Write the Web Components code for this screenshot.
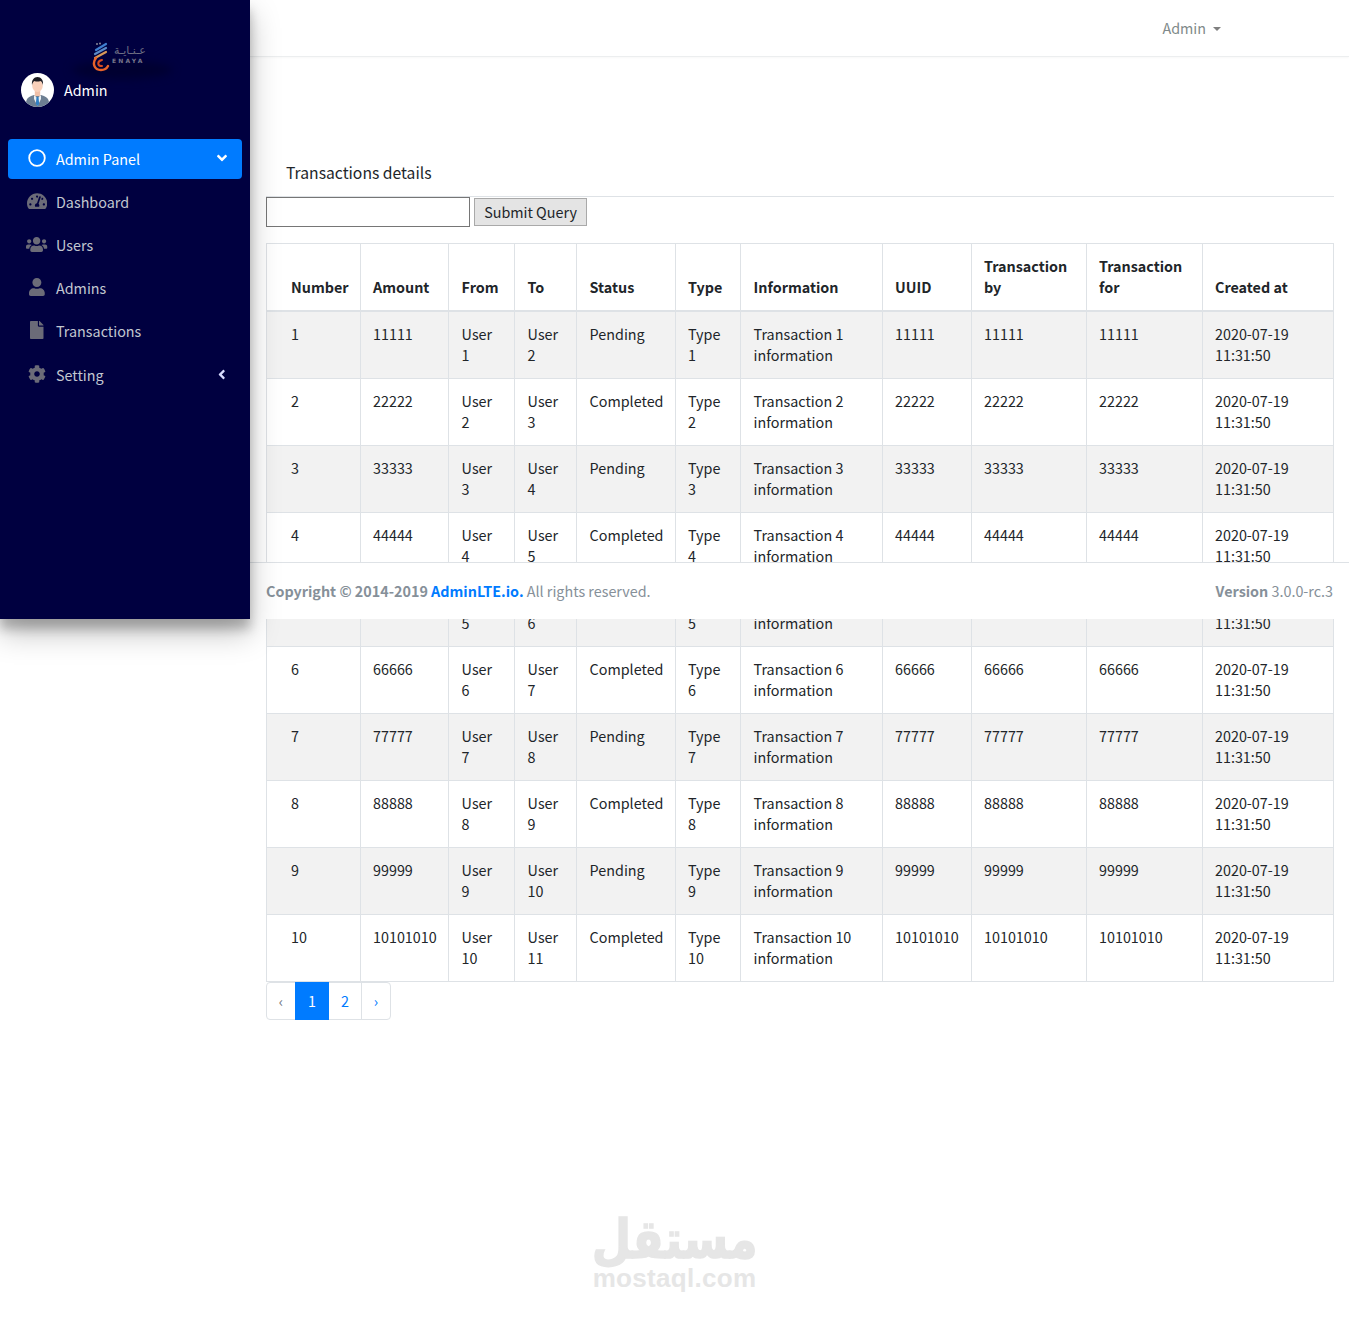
<!DOCTYPE html>
<html lang="en"><head><meta charset="utf-8"><title>Transactions</title>
<style>
html,body{margin:0;padding:0;background:#fff}
body{font-family:"Noto Sans CJK SC","Source Sans Pro","Noto Sans",sans-serif;font-size:14.35px;line-height:21px;color:#212529}
</style></head><body>
<x-app>
  <x-sidebar slot="side"></x-sidebar>
  <x-topbar slot="main"></x-topbar>
  <x-content slot="main"></x-content>
  <x-footer slot="over"></x-footer>
  <x-watermark slot="over"></x-watermark>
</x-app>
<script>
const ICONS={
dash:['0 0 576 512','M288 32C128.94 32 0 160.94 0 320c0 52.8 14.25 102.26 39.06 144.8 5.61 9.62 16.3 15.2 27.44 15.2h443c11.14 0 21.83-5.58 27.44-15.2C561.75 422.26 576 372.8 576 320c0-159.06-128.94-288-288-288zm0 64c14.71 0 26.58 10.13 30.32 23.65-1.11 2.26-2.64 4.23-3.45 6.67l-9.22 27.67c-5.13 3.49-10.97 6.01-17.64 6.01-17.67 0-32-14.33-32-32S270.33 96 288 96zM96 384c-17.67 0-32-14.33-32-32s14.33-32 32-32 32 14.33 32 32-14.33 32-32 32zm48-160c-17.67 0-32-14.33-32-32s14.33-32 32-32 32 14.33 32 32-14.33 32-32 32zm246.77-72.41l-61.33 184C343.13 347.33 352 364.54 352 384c0 11.72-3.38 22.55-8.88 32H232.88c-5.5-9.45-8.88-20.28-8.88-32 0-33.94 26.5-61.43 59.9-63.59l61.34-184.01c4.17-12.56 17.73-19.45 30.36-15.17 12.57 4.19 19.35 17.79 15.17 30.36zm14.66 57.2l15.52-46.55c3.47-1.29 7.13-2.23 11.05-2.23 17.67 0 32 14.33 32 32s-14.33 32-32 32c-11.38-.01-20.89-6.28-26.57-15.22zM480 384c-17.67 0-32-14.33-32-32s14.33-32 32-32 32 14.33 32 32-14.33 32-32 32z'],
users:['0 0 640 512','M96 224c35.3 0 64-28.7 64-64s-28.7-64-64-64-64 28.7-64 64 28.7 64 64 64zm448 0c35.3 0 64-28.7 64-64s-28.7-64-64-64-64 28.7-64 64 28.7 64 64 64zm32 32h-64c-17.6 0-33.5 7.1-45.1 18.6 40.3 22.1 68.9 62 75.1 109.4h66c17.7 0 32-14.3 32-32v-32c0-35.3-28.7-64-64-64zm-256 0c61.9 0 112-50.1 112-112S381.9 32 320 32 208 82.1 208 144s50.1 112 112 112zm76.8 32h-8.3c-20.8 10-43.9 16-68.5 16s-47.6-6-68.5-16h-8.3C179.6 288 128 339.6 128 403.2V432c0 26.5 21.5 48 48 48h288c26.5 0 48-21.5 48-48v-28.8c0-63.6-51.6-115.2-115.2-115.2zm-223.7-13.4C161.5 263.1 145.6 256 128 256H64c-35.3 0-64 28.7-64 64v32c0 17.7 14.3 32 32 32h65.9c6.3-47.4 34.9-87.3 75.2-109.4z'],
user:['0 0 448 512','M224 256c70.7 0 128-57.3 128-128S294.7 0 224 0 96 57.3 96 128s57.3 128 128 128zm89.6 32h-16.7c-22.2 10.2-46.9 16-72.9 16s-50.6-5.8-72.9-16h-16.7C60.2 288 0 348.2 0 422.4V464c0 26.5 21.5 48 48 48h352c26.5 0 48-21.5 48-48v-41.6c0-74.2-60.2-134.4-134.4-134.4z'],
file:['0 0 384 512','M224 136V0H24C10.7 0 0 10.7 0 24v464c0 13.3 10.7 24 24 24h336c13.3 0 24-10.7 24-24V160H248c-13.2 0-24-10.8-24-24zm160-14.1v6.1H256V0h6.1c6.4 0 12.5 2.5 17 7l97.9 98c4.5 4.5 7 10.6 7 16.9z'],
cog:['0 0 512 512','M487.4 315.7l-42.6-24.6c4.3-23.2 4.3-47 0-70.2l42.6-24.6c4.9-2.8 7.1-8.6 5.5-14-11.1-35.6-30-67.8-54.7-94.6-3.8-4.1-10-5.1-14.8-2.3L380.8 110c-17.9-15.4-38.5-27.3-60.8-35.1V25.8c0-5.6-3.9-10.5-9.4-11.7-36.7-8.2-74.3-7.8-109.2 0-5.5 1.2-9.4 6.1-9.4 11.7V75c-22.2 7.9-42.8 19.8-60.8 35.1L88.7 85.5c-4.9-2.8-11-1.9-14.8 2.3-24.7 26.7-43.6 58.9-54.7 94.6-1.7 5.4.6 11.2 5.5 14L67.3 221c-4.3 23.2-4.3 47 0 70.2l-42.6 24.6c-4.9 2.8-7.1 8.6-5.5 14 11.1 35.6 30 67.8 54.7 94.6 3.8 4.1 10 5.1 14.8 2.3l42.6-24.6c17.9 15.4 38.5 27.3 60.8 35.1v49.2c0 5.6 3.9 10.5 9.4 11.7 36.7 8.2 74.3 7.8 109.2 0 5.5-1.2 9.4-6.1 9.4-11.7v-49.2c22.2-7.9 42.8-19.8 60.8-35.1l42.6 24.6c4.9 2.8 11 1.9 14.8-2.3 24.7-26.7 43.6-58.9 54.7-94.6 1.5-5.5-.7-11.3-5.6-14.1zM256 336c-44.1 0-80-35.9-80-80s35.9-80 80-80 80 35.9 80 80-35.9 80-80 80z'],
down:['0 0 320 512','M143 352.3L7 216.3c-9.4-9.4-9.4-24.6 0-33.9l22.6-22.6c9.4-9.4 24.6-9.4 33.9 0l96.4 96.4 96.4-96.4c9.4-9.4 24.6-9.4 33.9 0l22.6 22.6c9.4 9.4 9.4 24.6 0 33.9l-136 136c-9.2 9.4-24.4 9.4-33.8 0z'],
left:['0 0 256 512','M31.7 239l136-136c9.4-9.4 24.6-9.4 33.9 0l22.6 22.6c9.4 9.4 9.4 24.6 0 33.9L127.9 256l96.4 96.4c9.4 9.4 9.4 24.6 0 33.9L201.7 409c-9.4 9.4-24.6 9.4-33.9 0l-136-136c-9.5-9.4-9.5-24.6-.1-34z']
};
const svg=(n,h)=>{const[v,d]=ICONS[n];const p=v.split(' ');const w=h*p[2]/p[3];return `<svg width="${w}" height="${h}" viewBox="${v}" fill="currentColor" aria-hidden="true"><path d="${d}"/></svg>`};
function def(name,html,init){customElements.define(name,class extends HTMLElement{constructor(){super();this.attachShadow({mode:'open'}).innerHTML=typeof html==='function'?html(this):html}connectedCallback(){init&&init(this)}})}

def('x-app',`<style>
:host{display:block;position:relative;height:1319px;overflow:hidden}
.row{display:flex;align-items:flex-start}
.side{flex:0 0 250px;position:relative;z-index:3}
.main{flex:1;min-width:0}
</style><div class="row"><div class="side"><slot name="side"></slot></div><div class="main"><slot name="main"></slot></div></div><slot name="over"></slot>`);

def('x-sidebar',()=>`<style>
:host{display:flex;flex-direction:column;width:250px;height:619px;box-sizing:border-box;background:#000040;color:#c2c7d0;box-shadow:0 14px 28px rgba(0,0,0,.25),0 10px 10px rgba(0,0,0,.22);padding:0 8px}
.brand{height:40px;margin-top:41px;display:block}
.user{display:flex;align-items:center;gap:10px;margin:-8px 0 0 13px;height:34px;color:#fff}
.user span{padding-bottom:2px}
nav{margin-top:32px;display:flex;flex-direction:column}
</style>
<x-logo class="brand"></x-logo>
<div class="user"><x-avatar></x-avatar><span>Admin</span></div>
<nav>
<x-navitem active icon="ring" caret="down">Admin Panel</x-navitem>
<x-navitem icon="dash">Dashboard</x-navitem>
<x-navitem icon="users">Users</x-navitem>
<x-navitem icon="user">Admins</x-navitem>
<x-navitem icon="file" style="margin-bottom:4px">Transactions</x-navitem>
<x-navitem icon="cog" caret="left">Setting</x-navitem>
</nav>`);

def('x-logo',`<style>
:host{display:block;position:relative}
.wrap{position:relative;left:62px;top:0;width:100px;height:40px}
.glow{position:absolute;left:2px;top:20px;width:100px;height:18px;border-radius:50%;background:#000030;filter:blur(4px)}
svg{position:absolute;left:22px;top:1px}
.ar{position:absolute;left:42px;top:3px;font:11px/13px "DejaVu Sans",sans-serif;color:#6f6f82;direction:rtl;width:36px;text-align:center;white-space:nowrap}
.en{position:absolute;left:42px;top:16px;font:bold 6px/8px "DejaVu Sans",sans-serif;color:#77778a;letter-spacing:2.2px;white-space:nowrap}
</style><div class="wrap"><div class="glow"></div>
<svg width="18" height="30" viewBox="0 0 18 30" fill="none" stroke-linecap="round">
<path d="M14 2 L4 8" stroke="#3f7fd0" stroke-width="2.200"/><path d="M14 6 L3 12" stroke="#5a8ac8" stroke-width="2.200"/><path d="M14 10 L3 16" stroke="#d89858" stroke-width="2.200"/>
<path d="M4 16 C0 21 2 28 9 28 C13 28 15 26 16 24" stroke="#e8622a" stroke-width="2.400"/><path d="M10 18 C5 19 5 24 10 24" stroke="#d84a20" stroke-width="2"/>
<circle cx="5" cy="2" r="1" fill="#8a8a9a"/><circle cx="8" cy="1.500" r="1" fill="#8a8a9a"/></svg>
<span class="ar">عـنـايـة</span><span class="en">ENAYA</span></div>`);

def('x-avatar',`<style>:host{display:block;width:33px;height:34px;flex:none}svg{display:block}</style>
<svg width="33" height="34" viewBox="0 0 33 34"><defs><clipPath id="c"><ellipse cx="16.5" cy="17" rx="16.5" ry="17"/></clipPath></defs>
<ellipse cx="16.5" cy="17" rx="16.5" ry="17" fill="#fff"/><g clip-path="url(#c)">
<path d="M5 30c0-5 4-7 8-8h7c4 1 8 3 8 8v4H5z" fill="#6d7f92"/>
<path d="M13 22l3.5 3 3.500-3 0 4-3.500 7-3.500-7z" fill="#e8eef2"/><path d="M15.500 24h2l.7 7-1.700 2-1.700-2z" fill="#2f7fc4"/>
<rect x="13.800" y="17" width="5.400" height="6" fill="#f0c0a8"/><ellipse cx="16.500" cy="12.500" rx="5.300" ry="6.500" fill="#f8d0ba"/>
<path d="M11 12c-.6-5 2-8 5.500-8s6.100 3 5.500 8c-.6-2.500-1.500-3.500-2.500-4-2 .8-4.500.8-6 0-1 .5-1.900 1.500-2.500 4z" fill="#1c1c22"/></g></svg>`);

def('x-navitem',el=>{
 const ic=el.getAttribute('icon'),c=el.getAttribute('caret');
 const sizes={dash:18,users:17,user:18,file:18,cog:18};
 const icon=ic==='ring'?`<svg width="18" height="18" viewBox="0 0 18 18"><circle cx="9" cy="9" r="7.800" fill="none" stroke="currentColor" stroke-width="1.800"/></svg>`:svg(ic,sizes[ic]);
 return `<style>
:host{display:flex;align-items:center;height:40px;box-sizing:border-box;margin-bottom:3px;border-radius:4px;color:#c2c7d0;padding:0 14px 2px 18px}
:host([active]){background:#007bff;color:#fff}
.i{width:22px;margin-right:8px;display:flex;justify-content:center;color:#6b6b78;flex:none}
:host([active]) .i{color:#fff}
.t{flex:1}
.c{display:flex;color:inherit;margin-right:1px}
:host(:not([active])) .c{color:#d8dcff;margin-right:3px}
</style><span class="i">${icon}</span><span class="t"><slot></slot></span>${c?`<span class="c">${svg(c,c==='down'?16:15)}</span>`:''}`;
});

def('x-topbar',`<style>
:host{display:flex;justify-content:flex-end;align-items:center;height:57px;box-sizing:border-box;border-bottom:1px solid #eceeef;box-shadow:0 1px 2px rgba(0,0,0,.03);padding:0 128px 2px 0;color:#7f8a8a}
.car{display:inline-block;width:0;height:0;margin-left:7px;border:4.500px solid transparent;border-top-color:#7f7f7f;border-bottom:0;position:relative;top:-3px}
</style><span>Admin<i class="car"></i></span>`);

def('x-content',`<style>
:host{display:block;padding:103px 15px 0 16px}
.head{padding:0 20px;height:36px;border-bottom:1px solid #dee2e6;font-size:15.7px;line-height:26px;color:#212529}
form{display:flex;align-items:center;height:30px;gap:4px;margin:0 0 16px}
input{width:204px;height:30px;box-sizing:border-box;border:1px solid #767676;background:#fff;padding:0}
button{width:113px;height:28px;box-sizing:border-box;border:1px solid #a9a9a9;background:#e4e4e4;color:#212529;font:inherit;padding:0 0 2px}
</style>
<div class="head">Transactions details</div>
<form onsubmit="return false"><input type="text" aria-label="Search"><button type="button">Submit Query</button></form>
<x-txtable></x-txtable><x-pager></x-pager>`);

def('x-txtable',()=>{
 const hd=['Number','Amount','From','To','Status','Type','Information','UUID','Transaction by','Transaction for','Created at'];
 const w=[94,88,66,62,99,65,142,89,115,116,131];
 let rows='';
 for(let i=1;i<=10;i++){
  const n=i===10?'10101010':String(i).repeat(5);
  const cells=[i,n,`User ${i}`,`User ${i+1}`,i%2?'Pending':'Completed',`Type ${i}`,`Transaction ${i} information`,n,n,n,'2020-07-19 11:31:50'];
  rows+=`<tr>${cells.map(c=>`<td>${c}</td>`).join('')}</tr>`;
 }
 return `<style>
:host{display:block;width:1067px}
table{border-collapse:collapse;table-layout:fixed;width:1067px}
th,td{border:1px solid #dee2e6;padding:11px 12px 13px;vertical-align:top;text-align:left;line-height:21px;box-sizing:border-box;overflow:hidden}
th{vertical-align:bottom;font-weight:700;border-bottom-width:2px;color:#212529}
tr>:first-child{padding-left:24px}
tr>:nth-child(3),tr>:nth-child(4),tr>:nth-child(5),tr>:nth-child(7){padding-left:12.6px;padding-right:11.4px}
tbody tr:nth-child(odd){background:#f2f2f2}
</style><table><colgroup>${w.map(x=>`<col style="width:${x}px">`).join('')}</colgroup>
<thead><tr>${hd.map(h=>`<th>${h}</th>`).join('')}</tr></thead><tbody>${rows}</tbody></table>`;
});

def('x-pager',`<style>
:host{display:inline-flex;height:38px;box-sizing:border-box;border:1px solid #dee2e6;border-radius:4px;color:#007bff;vertical-align:top}
span{display:flex;align-items:center;justify-content:center;padding-bottom:2px;box-sizing:border-box}
.a{width:28px;color:#6c757d}.b{width:34px;background:#007bff;color:#fff;margin:-1px 0}.c{width:33px;border-right:1px solid #dee2e6}.d{width:28px}
</style><span class="a">‹</span><span class="b">1</span><span class="c">2</span><span class="d">›</span>`);

def('x-footer',`<style>
:host{position:absolute;z-index:2;left:250px;right:0;top:562px;height:57px;box-sizing:border-box;background:#fff;border-top:1px solid #dee2e6;display:flex;justify-content:space-between;align-items:center;padding:0 16px 2px;color:#869099}
a{color:#007bff;text-decoration:none;font-weight:700}b{font-weight:700}
</style><span><b>Copyright © 2014-2019 <a href="#">AdminLTE.io.</a></b> All rights reserved.</span><span><b>Version</b> 3.0.0-rc.3</span>`);

def('x-watermark',`<style>
:host{position:absolute;left:0;right:0;top:1208px;display:flex;flex-direction:column;align-items:center;color:#e6e6e6;pointer-events:none}
.ar{font:bold 54px/64px "DejaVu Sans",sans-serif;direction:rtl;transform:scaleX(.84);-webkit-text-stroke:1.500px #e6e6e6}
.en{font:bold 26px/26px "Liberation Sans",sans-serif;letter-spacing:.3px;margin-top:-7px}
</style><span class="ar">مستقل</span><span class="en">mostaql.com</span>`);
</script></body></html>
